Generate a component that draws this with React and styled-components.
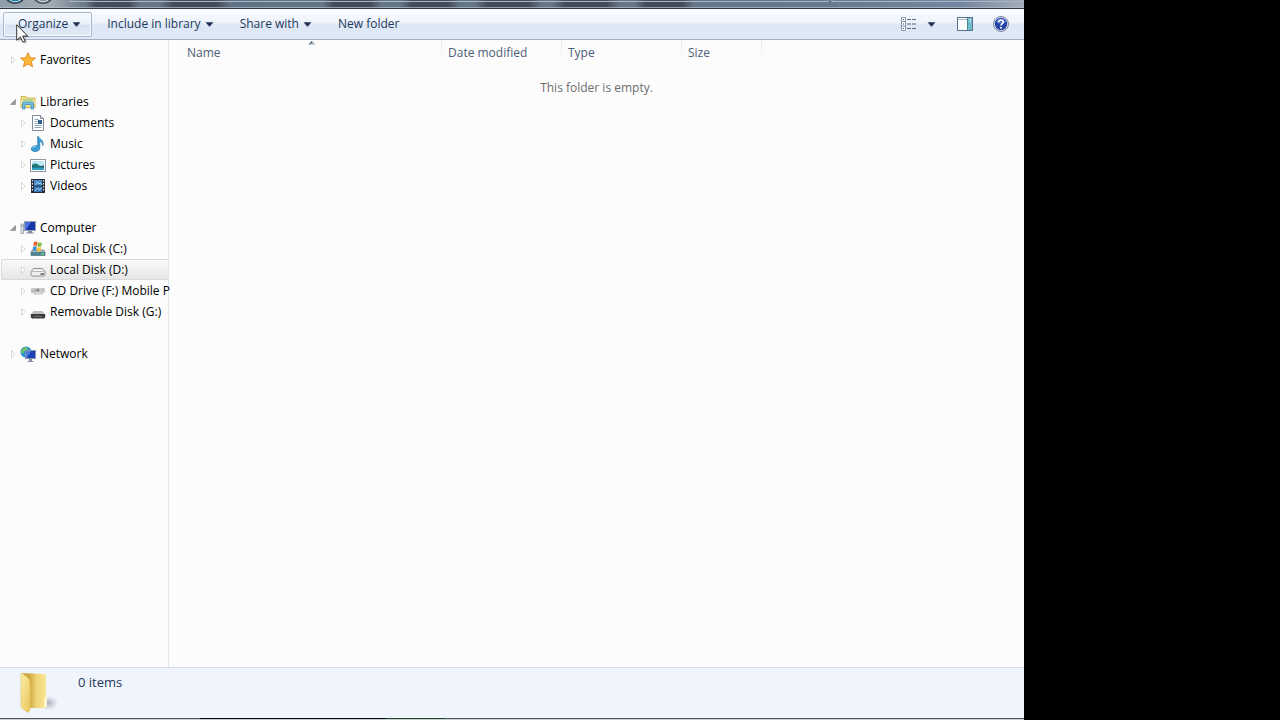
import React from 'react';
import styled, { createGlobalStyle, css } from 'styled-components';

const GlobalStyle = createGlobalStyle`
  * { box-sizing: border-box; }
  body {
    margin: 0;
    background: #000;
    font-family: 'Open Sans', 'Noto Sans', sans-serif;
    font-size: 12px;
    line-height: 20px;
    color: #000;
  }
`;

const Explorer = styled.div`
  position: relative;
  display: flex;
  flex-direction: column;
  width: 80%;
  min-height: 100vh;
  background: #fcfcfc;
  overflow: hidden;
`;

const TitleStrip = styled.header`
  height: 9px;
  overflow: hidden;
  background: #5e6d80;
  border-bottom: 1px solid #2c3848;
  svg { display: block; width: 100%; height: 8px; }
`;

const Toolbar = styled.div`
  display: flex;
  align-items: center;
  height: 31px;
  padding: 0 12px 0 3px;
  background: linear-gradient(#fafcff 0%, #eef3fc 45%, #dde7f5 52%, #dfe8f6 100%);
  border-bottom: 1px solid #a0afc3;
`;

const ToolButton = styled.button`
  display: flex;
  align-items: center;
  justify-content: center;
  gap: 4px;
  height: 25px;
  min-width: ${(p) => p.$min || 0}px;
  padding: ${(p) => (p.$icon ? '0' : '0 10px 0 14px')};
  border: 1px solid transparent;
  border-radius: 2px;
  background: none;
  font: inherit;
  color: #1e395b;
  white-space: nowrap;
  ${(p) => p.$hot && css`
    border-color: #a9b8ce;
    background: linear-gradient(#f8fbff 0%, #eaf1fb 48%, #d5e0f0 52%, #e3ebf7 100%);
    box-shadow: inset 0 0 0 1px #f5f9ff;
  `}
`;

const Spacer = styled.div`
  flex: 1;
`;

const Body = styled.div`
  display: flex;
  flex: 1;
`;

const Sidebar = styled.nav`
  display: flex;
  flex-direction: column;
  gap: 21px;
  flex: 0 0 169px;
  width: 169px;
  padding: 9px 0 0 1px;
  border-right: 1px solid #e1e6ef;
`;

const Tree = styled.ul`
  margin: 0;
  padding: 0;
  list-style: none;
`;

const TreeRow = styled.div`
  display: flex;
  align-items: center;
  height: 21px;
  padding-left: ${(p) => (p.$nested ? 17 : 7)}px;
  border: 1px solid transparent;
  border-right: 0;
  border-radius: 2px 0 0 2px;
  ${(p) => p.$selected && css`
    border-color: #dadada;
    background: linear-gradient(#f9f9f9, #e6e6e6);
  `}
`;

const Expander = styled.button`
  display: flex;
  flex: 0 0 11px;
  width: 11px;
  height: 12px;
  padding: 0;
  border: 0;
  background: none;
`;

const TreeLink = styled.a`
  display: flex;
  flex: 1;
  align-items: center;
  gap: 4px;
  color: #000;
  text-decoration: none;
  white-space: nowrap;
  svg { flex: none; }
`;

const Content = styled.main`
  flex: 1;
  min-width: 0;
  padding-left: 12px;
`;

const FileTable = styled.table`
  width: 581px;
  table-layout: fixed;
  border-collapse: separate;
  border-spacing: 0;
`;

const ColumnHead = styled.th`
  position: relative;
  width: ${(p) => p.$width}px;
  height: 25px;
  padding: 0 6px;
  background: linear-gradient(#e2e7ef, #f6f8fb) right top / 1px 16px no-repeat;
  font-weight: 400;
  text-align: left;
  color: #4c607a;
`;

const SortMark = styled.svg`
  position: absolute;
  top: 1px;
  left: calc(50% - 4px);
`;

const EmptyNote = styled.p`
  margin: 13px 12px 0 0;
  text-align: center;
  color: #6d6d6d;
`;

const DetailsPane = styled.footer`
  display: flex;
  align-items: flex-start;
  gap: 20px;
  height: 51px;
  padding: 3px 18px 0;
  background: #f0f4fc;
  border-top: 1px solid #d4dae4;
  color: #1e395b;
`;

const ItemCount = styled.span`
  padding-top: 1px;
  font-size: 13px;
`;

const TaskbarEdge = styled.div`
  height: 2px;
  background: linear-gradient(90deg, #55565e 0 200px, #08080c 200px 386px, #1a4a24 386px 445px, #55565e 445px);
  border-bottom: 1px solid #c9cdd4;
`;

const Pointer = styled.svg`
  position: absolute;
  top: 24px;
  left: 16px;
  pointer-events: none;
`;

const DownArrow = () => (
  <svg width="9" height="5" viewBox="0 0 9 5" aria-hidden="true">
    <path d="M.5 .3h8L4.500 4.800z" fill="#1e2f52" />
  </svg>
);

const Closed = () => (
  <svg width="8" height="12" viewBox="0 0 8 12"><path d="M2.500 2.500v7L6 6z" fill="#fff" stroke="#d2d2d2" strokeWidth=".9" /></svg>
);

const Opened = () => (
  <svg width="8" height="12" viewBox="0 0 8 12"><path d="M6.500 3.500v5h-5z" fill="#9a9a9a" stroke="#808080" strokeWidth=".6" /></svg>
);

const monitor = (x, y) => (
  <g transform={`translate(${x} ${y})`}>
    <rect x=".5" y=".5" width="10" height="8" fill="#1c43b5" stroke="#8b94ad" />
    <path d="M1 1h5L2 8H1z" fill="#4d7be0" />
    <path d="M4 9h3v2H4zM2.500 11h6v1h-6z" fill="#8791a6" />
  </g>
);

const icons = {
  favorites: (
    <path d="M8 .8l2.100 4.900 5.300.4-4.100 3.500 1.300 5.200L8 12l-4.600 2.800 1.300-5.200L.6 6.100l5.300-.4z" fill="#fdb93a" stroke="#e0851b" strokeWidth=".9" />
  ),
  libraries: (
    <>
      <path d="M1 13.500V2.500h5l1 1.500h8v9.500z" fill="#f5e08a" stroke="#cdb65b" />
      <path d="M3 5h10v2H3z" fill="#a9d68b" />
      <path d="M1 7h14v3H1z" fill="#f6e9a8" />
      <path d="M2.500 15V9q0-1 1-1h9q1 0 1 1v6H11v-3.500q0-1-1-1H6q-1 0-1 1V15z" fill="#71bfe2" stroke="#3d8db8" strokeWidth=".8" />
    </>
  ),
  documents: (
    <>
      <path d="M2.500.5h8l3 3v12h-11z" fill="#fff" stroke="#7e8a97" />
      <path d="M10.500.5v3h3" fill="#dfe6ee" stroke="#7e8a97" />
      <path d="M4.500 4.500h4M4.500 6.500h3M4.500 8.500h3M4.500 10.500h7M4.500 12.500h7" stroke="#8fa4bb" />
      <rect x="8" y="5" width="4" height="4" fill="#2d5f92" />
    </>
  ),
  music: (
    <>
      <path d="M8.500 .5c.6 2.600 5.800 3.500 4.400 9-.3-2.900-1.800-3.900-3.200-4.200V12c0 4.500-8.400 4.600-8.400.9 0-2.700 4-4 6.400-2.800V.5z" fill="#3ba0d8" stroke="#1d74ad" strokeWidth=".7" />
      <path d="M2.500 12c.5-1.300 2-1.700 3.300-1.500" stroke="#a8e0f8" fill="none" />
    </>
  ),
  pictures: (
    <>
      <rect x=".5" y="2.500" width="15" height="12" fill="#fff" stroke="#8d98a5" />
      <path d="M2 4h12v4H2z" fill="#bfe6f6" />
      <path d="M2 8c2-2 4-2 6-.5S12 9 14 8v2H2z" fill="#247a78" />
      <path d="M2 10h12v3H2z" fill="#2f9fc4" />
      <path d="M2 9q6 2 12 0v1.500H2z" fill="#155e65" />
    </>
  ),
  videos: (
    <>
      <rect x="1" y="1" width="14" height="14" fill="#252c38" />
      <path d="M4 2h8v5.500H4z" fill="#488bc8" />
      <path d="M4 8.500h8V14H4z" fill="#3b79ba" />
      <path d="M5 7l2.500-3L9 6l1.500-1.500L12 7M5 13l2.500-3L9 12l3-2" stroke="#9ccdf0" fill="none" />
      <path d="M2.500 2v12M13.500 2v12" stroke="#dfe6ee" strokeWidth="1.200" strokeDasharray="1.500 1.500" />
    </>
  ),
  computer: (
    <>
      <path d="M1 4h2.500v9.500H1z" fill="#e1e5eb" stroke="#8f98a6" strokeWidth=".8" />
      <path d="M1.500 6h1.500" stroke="#4e9a55" />
      <rect x="4.500" y="1.500" width="11" height="9" fill="#1835a8" stroke="#98a2b8" />
      <path d="M5 2h6L6 10H5z" fill="#4b72dc" />
      <path d="M8 11h4v1.500H8zM6 12.500h8v1H6z" fill="#8791a6" />
    </>
  ),
  diskC: (
    <>
      <path d="M2.500 9L1 11v3.500h14V11l-1.500-2z" fill="#a9b8bd" stroke="#68777e" strokeWidth=".8" />
      <path d="M1 11h14v3.500H1z" fill="#4e8794" />
      <path d="M11 13h3" stroke="#7ff06d" />
      <path d="M4 1q2-1 3.500 0L7 5q-1.700-.8-3.700 0z" fill="#e8602c" />
      <path d="M8 1.300q2 1 3.800 0L11.200 5.200q-2 1-3.700 0z" fill="#7fb93c" />
      <path d="M3.200 5.700q2-1 3.600 0L6.200 9.700q-1.700-.8-3.700 0z" fill="#3e8bd0" />
      <path d="M7.400 6q2 1 3.700 0l-.6 4q-2 1-3.700 0z" fill="#f7c331" />
    </>
  ),
  diskD: (
    <>
      <path d="M1 9.500l2.500-3h9l2.500 3v3q0 1.500-1.500 1.500h-11Q1 14 1 12.500z" fill="#f1f1f1" stroke="#858585" strokeWidth=".9" />
      <path d="M2 9.500h12" stroke="#bbb" />
      <path d="M10.500 12H14" stroke="#67785f" strokeWidth="1.800" />
    </>
  ),
  cd: (
    <>
      <path d="M1.500 5.500h13v4h-2v1.500h-9V9.500h-2z" fill="#dcdcdc" stroke="#b7b7b7" strokeWidth=".7" />
      <path d="M2 8.500l2-2M4.500 9l1.500-2.500M7 9V6.500h2L8.500 9M11 8.500l2-2" stroke="#777" fill="none" />
    </>
  ),
  removable: (
    <>
      <path d="M1 10.500L3.500 7h9l2.500 3.500z" fill="#bdbdbd" />
      <path d="M.8 10h14.400v2.500q0 2-1.500 2H2.300q-1.500 0-1.500-2z" fill="#3b3d40" />
      <path d="M4 13q4-2 8 0" stroke="#777" fill="none" />
    </>
  ),
  network: (
    <>
      <circle cx="6" cy="6" r="5.500" fill="#2393cf" />
      <path d="M2 3q3-3 6-1L6.500 4.500 4 5.500 3 8 1 6zM5 7.500l3 .5-2 3z" fill="#6cc36a" />
      {monitor(5, 4)}
    </>
  ),
};

const ItemIcon = ({ name }) => (
  <svg width="16" height="16" viewBox="0 0 16 16" aria-hidden="true">{icons[name]}</svg>
);

const groups = [
  { label: 'Favorites', icon: 'favorites' },
  {
    label: 'Libraries',
    icon: 'libraries',
    children: [
      { label: 'Documents', icon: 'documents' },
      { label: 'Music', icon: 'music' },
      { label: 'Pictures', icon: 'pictures' },
      { label: 'Videos', icon: 'videos' },
    ],
  },
  {
    label: 'Computer',
    icon: 'computer',
    children: [
      { label: 'Local Disk (C:)', icon: 'diskC' },
      { label: 'Local Disk (D:)', icon: 'diskD', selected: true },
      { label: 'CD Drive (F:) Mobile P', icon: 'cd' },
      { label: 'Removable Disk (G:)', icon: 'removable' },
    ],
  },
  { label: 'Network', icon: 'network' },
];

const TreeItem = ({ item, nested }) => (
  <li>
    <TreeRow $nested={nested} $selected={item.selected}>
      <Expander type="button" aria-label={`Expand ${item.label}`} aria-expanded={!!item.children}>
        {item.children ? <Opened /> : <Closed />}
      </Expander>
      <TreeLink href="#" aria-current={item.selected ? 'page' : undefined}>
        <ItemIcon name={item.icon} />
        {item.label}
      </TreeLink>
    </TreeRow>
    {item.children && (
      <Tree>
        {item.children.map((child) => <TreeItem key={child.label} item={child} nested />)}
      </Tree>
    )}
  </li>
);

const columns = [
  { label: 'Name', width: 261, sorted: true },
  { label: 'Date modified', width: 120 },
  { label: 'Type', width: 120 },
  { label: 'Size', width: 80 },
];

const darkPatches = [[85, 55], [160, 70], [322, 60], [400, 60], [474, 68], [552, 68], [634, 60]];

const TitleGlass = () => (
  <svg viewBox="0 0 1024 8" preserveAspectRatio="none" aria-hidden="true">
    <defs>
      <linearGradient id="glass">
        <stop offset="0" stopColor="#8d9da9" />
        <stop offset=".05" stopColor="#a3adb5" />
        <stop offset=".08" stopColor="#6c7c89" />
        <stop offset=".2" stopColor="#5f7184" />
        <stop offset=".3" stopColor="#627688" />
        <stop offset=".65" stopColor="#667789" />
        <stop offset=".8" stopColor="#64788f" />
        <stop offset=".94" stopColor="#7587a0" />
        <stop offset="1" stopColor="#a3aeba" />
      </linearGradient>
      <linearGradient id="patch">
        <stop offset="0" stopColor="#3b424e" stopOpacity="0" />
        <stop offset=".2" stopColor="#3b424e" stopOpacity=".8" />
        <stop offset=".8" stopColor="#3b424e" stopOpacity=".8" />
        <stop offset="1" stopColor="#3b424e" stopOpacity="0" />
      </linearGradient>
    </defs>
    <path d="M0 0h1024v8H0z" fill="url(#glass)" />
    {darkPatches.map(([x, w]) => <rect key={x} x={x} width={w} height="8" fill="url(#patch)" />)}
    <path d="M70 0v1.500h758V0M832 0v1.500h192" fill="none" stroke="#aab6c2" />
    <path d="M0 7.500h1024" stroke="#b3c0cc" strokeOpacity=".7" />
    <ellipse cx="15" cy="-4" rx="9" ry="7" fill="#167a9e" stroke="#3a4b58" strokeWidth="2" />
    <ellipse cx="15" cy="-4" rx="7.500" ry="5.800" fill="#167a9e" stroke="#bfe9f5" />
    <ellipse cx="43" cy="-4" rx="9" ry="7" fill="#8294a3" stroke="#4c5964" strokeWidth="2" />
    <ellipse cx="43" cy="-4" rx="7.500" ry="5.800" fill="#8294a3" stroke="#dbe3e8" />
  </svg>
);

export default function App() {
  return (
    <>
      <GlobalStyle />
      <Explorer>
        <TitleStrip><TitleGlass /></TitleStrip>
        <Toolbar role="toolbar" aria-label="Folder commands">
          <ToolButton type="button" $hot>Organize<DownArrow /></ToolButton>
          <ToolButton type="button">Include in library<DownArrow /></ToolButton>
          <ToolButton type="button">Share with<DownArrow /></ToolButton>
          <ToolButton type="button">New folder</ToolButton>
          <Spacer />
          <ToolButton type="button" $icon $min={26} aria-label="Change your view">
            <svg width="16" height="14" viewBox="0 0 16 14">
              <path d="M.5 .5h4v13h-4zM.5 4.500h4M.5 9h4" fill="#fff" stroke="#8b95a5" />
              <path d="M2 2.500h1M2 7h1M2 11.500h1" stroke="#394d75" />
              <path d="M6 2.500h4M11 2.500h4M6 7h4M11 7h4M6 11.500h4M11 11.500h4" stroke="#5b6880" />
            </svg>
          </ToolButton>
          <ToolButton type="button" $icon $min={18} aria-label="More view options"><DownArrow /></ToolButton>
          <ToolButton type="button" $icon $min={50} aria-label="Show the preview pane">
            <svg width="16" height="14" viewBox="0 0 16 14">
              <rect x=".5" y=".5" width="15" height="13" fill="#fff" stroke="#57708b" />
              <path d="M1 2.500h9" stroke="#a7b8c9" />
              <path d="M10 1h5v12h-5z" fill="#6fbccb" />
              <path d="M10.500 1v12" stroke="#4d8596" />
              <path d="M12 2l2 0v5z" fill="#b9e3ea" />
            </svg>
          </ToolButton>
          <ToolButton type="button" $icon $min={22} aria-label="Get help">
            <svg width="16" height="16" viewBox="0 0 16 16">
              <circle cx="8" cy="8" r="7.500" fill="#dfe4f2" stroke="#7c879f" />
              <circle cx="8" cy="8" r="6.200" fill="#2444a8" />
              <path d="M3 6a5.500 5.500 0 0 1 10 0q-5 3-10 0" fill="#5a78d0" />
              <path d="M5.800 6.200c0-3 4.500-2.800 4.500-.2C10.300 7.700 8 7.700 8 9.600" fill="none" stroke="#fff" strokeWidth="1.600" />
              <circle cx="8" cy="11.800" r="1" fill="#fff" />
            </svg>
          </ToolButton>
        </Toolbar>
        <Body>
          <Sidebar aria-label="Folders">
            {groups.map((group) => (
              <Tree key={group.label}><TreeItem item={group} /></Tree>
            ))}
          </Sidebar>
          <Content>
            <FileTable>
              <thead>
                <tr>
                  {columns.map((c) => (
                    <ColumnHead key={c.label} scope="col" $width={c.width} aria-sort={c.sorted ? 'ascending' : undefined}>
                      {c.label}
                      {c.sorted && (
                        <SortMark width="8" height="4" viewBox="0 0 8 4">
                          <path d="M4 0l3.500 3.500h-7z" fill="#9fb2c0" />
                          <path d="M4 0v1.500L1.500 3.500h-1z" fill="#34495c" />
                        </SortMark>
                      )}
                    </ColumnHead>
                  ))}
                </tr>
              </thead>
            </FileTable>
            <EmptyNote>This folder is empty.</EmptyNote>
          </Content>
        </Body>
        <DetailsPane>
          <svg width="40" height="44" viewBox="0 0 40 44" aria-hidden="true">
            <defs>
              <linearGradient id="flap" x2="1" y2="1">
                <stop offset="0" stopColor="#fbeea9" />
                <stop offset="1" stopColor="#e9c75a" />
              </linearGradient>
              <linearGradient id="back">
                <stop offset=".3" stopColor="#cfa840" />
                <stop offset=".6" stopColor="#f0d57a" />
                <stop offset="1" stopColor="#f8e594" />
              </linearGradient>
              <radialGradient id="shade">
                <stop offset="0" stopColor="#8f96a3" stopOpacity=".7" />
                <stop offset="1" stopColor="#8f96a3" stopOpacity="0" />
              </radialGradient>
            </defs>
            <ellipse cx="30" cy="32" rx="10" ry="7" fill="url(#shade)" />
            <path d="M4 2l21 1q3 0 3 2v30q0 2-2 2H11V8z" fill="url(#back)" />
            <path d="M26 27l3-2v10l-3 2z" fill="#fff6cf" />
            <path d="M3 3q0-1 1-.5l6 4.500q2 1.500 2 4v25q0 6-3 5l-5-4q-1-1-1-3z" fill="url(#flap)" stroke="#dfbe58" strokeWidth=".6" />
          </svg>
          <ItemCount>0 items</ItemCount>
        </DetailsPane>
        <TaskbarEdge />
        <Pointer width="14" height="21" viewBox="0 0 14 21" aria-hidden="true">
          <path d="M2 2v16l4-3.500 2.500 5.500 3-1.500L9 13.500h5z" fill="#000" opacity=".2" />
          <path d="M.7 .8v15.500l3.700-3.400 2.400 5.300 2.300-1-2.400-5.200h4.900z" fill="#fff" stroke="#222" strokeWidth=".9" />
        </Pointer>
      </Explorer>
    </>
  );
}
